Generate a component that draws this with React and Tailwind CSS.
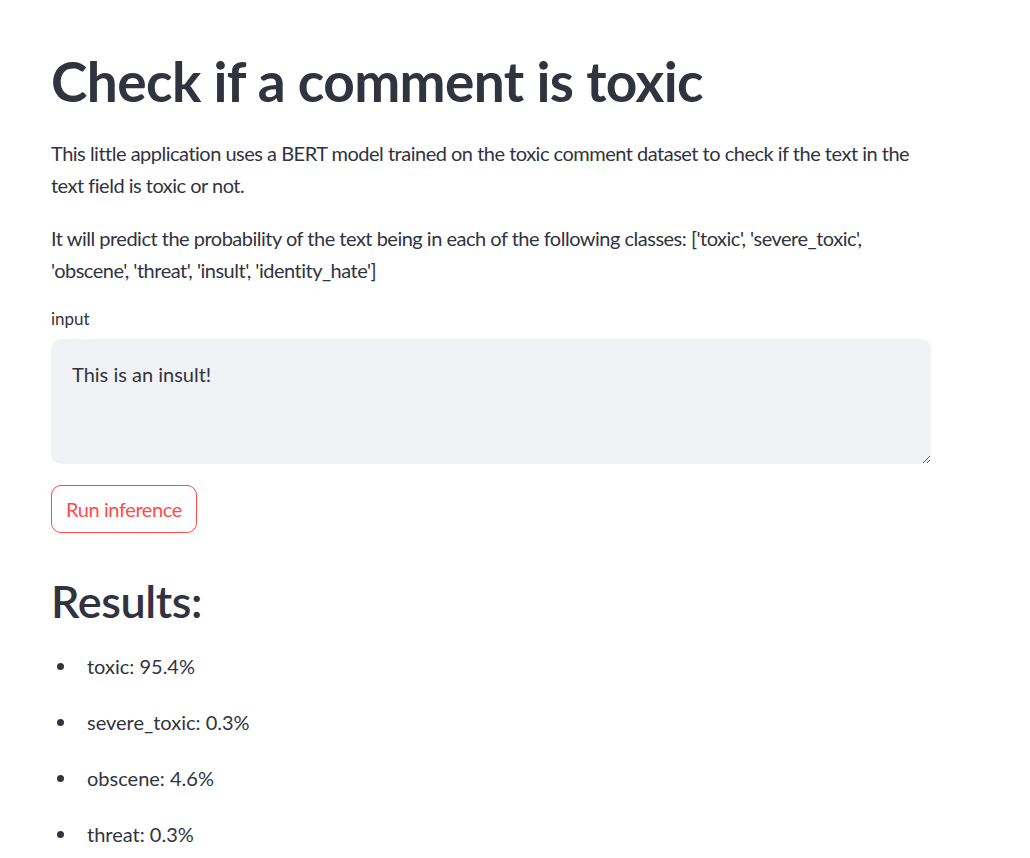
import { useState } from 'react'

const CLASSES = ['toxic', 'severe_toxic', 'obscene', 'threat', 'insult', 'identity_hate']

const RESULTS = [
  ['toxic', '95.4%'],
  ['severe_toxic', '0.3%'],
  ['obscene', '4.6%'],
  ['threat', '0.3%'],
]

const font = { fontFamily: 'Lato, "Noto Sans", sans-serif' }

const classesText = `It will predict the probability of the text being in each of the following classes: [${CLASSES.map(
  (c) => `'${c}'`
).join(', ')}]`

export default function App() {
  const [text, setText] = useState('This is an insult!')

  return (
    <div className="min-h-screen bg-white text-[#31333f]" style={font}>
      <div className="w-[880px] ml-[51px] pt-[48px]">
        <h1 className="text-[55px] leading-[66px] font-bold tracking-[-0.6px]">Check if a comment is toxic</h1>

        <p className="mt-[23px] text-[20px] leading-[32px] tracking-[-0.5px]">
          This little application uses a BERT model trained on the toxic comment dataset to check if the text in the
          text field is toxic or not.
        </p>
        <p className="mt-[21px] text-[20px] leading-[32px] tracking-[-0.5px]">{classesText}</p>

        <label className="block mt-[22px] text-[17px] leading-[22px]">input</label>
        <textarea
          value={text}
          onChange={(e) => setText(e.target.value)}
          className="block mt-[9px] w-full h-[125px] rounded-[10px] bg-[#f0f2f6] px-[21px] py-[21px] text-[20px] leading-[28px] text-[#31333f] outline-none resize-y"
          style={font}
        />

        <button className="mt-[21px] h-[48px] px-[14px] rounded-[10px] border border-[#ff4b4b] text-[#ff4b4b] text-[20px] tracking-[-0.4px] bg-white">
          Run inference
        </button>

        <h2 className="mt-[40px] text-[45px] leading-[56px] font-semibold tracking-[-0.4px]">Results:</h2>

        <ul className="mt-[21px] text-[20px]">
          {RESULTS.map(([k, v]) => (
            <li key={k} className="flex items-center leading-[32px] mb-[24px]">
              <span className="ml-[6px] mr-[23px] w-[7px] h-[7px] rounded-full bg-[#31333f] shrink-0" />
              <span>{`${k}: ${v}`}</span>
            </li>
          ))}
        </ul>
      </div>
    </div>
  )
}
